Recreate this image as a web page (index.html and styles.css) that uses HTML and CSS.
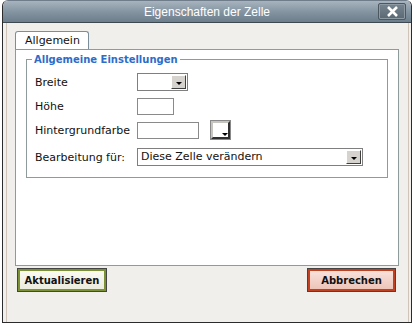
FILE: index.html
```
<html>
  <head>
    <title>Eigenschaften der Zelle</title>
    <link rel="stylesheet" href="styles.css">
  </head>
  <body>
    <div class="dialog">
      <div class="titlebar">
        <span class="title">Eigenschaften der Zelle</span>
        <span class="close">
          <svg width="13" height="11" viewBox="0 0 13 11"><path d="M2 1 L11 10 M11 1 L2 10" stroke="#fff" stroke-width="2.6"/></svg>
        </span>
      </div>
      <div class="frame">
        <div class="tabs">
          <div class="tab">Allgemein</div>
        </div>
        <div class="panel">
          <fieldset class="group">
            <legend>Allgemeine Einstellungen</legend>
            <div class="row">
              <label>Breite</label>
              <span class="select small"><span class="value"></span><span class="arrow"><i></i></span></span>
            </div>
            <div class="row">
              <label>Höhe</label>
              <span class="input short"></span>
            </div>
            <div class="row">
              <label>Hintergrundfarbe</label>
              <span class="input mid"></span>
              <span class="picker"><i></i></span>
            </div>
            <div class="row last">
              <label>Bearbeitung für:</label>
              <span class="select wide"><span class="value">Diese Zelle verändern</span><span class="arrow"><i></i></span></span>
            </div>
          </fieldset>
        </div>
        <div class="buttons">
          <button class="btn ok">Aktualisieren</button>
          <button class="btn cancel">Abbrechen</button>
        </div>
      </div>
    </div>
  </body>
</html>
```

FILE: styles.css
```
body{
  margin:0;
  background:#fff;
  font-family:"DejaVu Sans",Verdana,sans-serif;
  font-size:10px;
  color:#111;
}

.dialog{
  margin-left:2px;
  width:408px;
  height:321px;
  border:1px solid #2b2b2b;
  border-top-color:#6e7d89;
  border-radius:6px 6px 0 0;
  background:#f0efec;
  overflow:hidden;
}

.titlebar{
  position:relative;
  height:21px;
  background:linear-gradient(#a7b4bf,#8595a2 50%,#6c7d8b);
  border-bottom:1px solid #3d4850;
  text-align:center;
}

.title{
  font-family:"Liberation Sans",Arial,sans-serif;
  font-size:12px;
  line-height:22px;
  color:#fff;
}

/* close box sits over the bar */
.close{
  position:absolute;
  right:5px;
  top:2px;
  width:26px;
  height:15px;
  border:1px solid #4c5760;
  border-radius:2px;
  background:linear-gradient(#76858f,#5a6873);
  box-shadow:inset 0 0 0 1px #8d9aa3;
  display:flex;
  align-items:center;
  justify-content:center;
}

.frame{
  margin:0 2px 2px 3px;
  height:294px;
  border:1px solid #cec5b8;
  border-top:none;
  padding:8px 9px 0 8px;
}

.tabs{
  display:flex;
  height:18px;
}

.tab{
  width:74px;
  height:18px;
  border:1px solid #7d8d99;
  border-bottom:none;
  border-radius:3px 3px 0 0;
  background:#fff;
  font-size:11px;
  line-height:18px;
  padding-left:9px;
  box-sizing:border-box;
  position:relative;
  z-index:1;
}

.panel{
  height:211px;
  border:1px solid #8e9b9b;
  background:#fff;
  padding:4px 10px 0 10px;
}

.group{
  margin:0;
  border:1px solid #8e9b9b;
  padding:5px 8px 8px 8px;
}

.group legend{
  padding:0 2px;
  margin-left:-3px;
  color:#2e6cc8;
  font-weight:bold;
  font-size:10px;
}

.row{
  display:flex;
  align-items:center;
  height:24px;
  font-size:11px;
}

.row.last{
  margin-top:3px;
}

.row label{
  width:102px;
}

.input{
  display:block;
  height:15px;
  border:1px solid #8a8a8a;
  background:#fff;
}

.short{width:35px;}
.mid{width:60px;}

.select{
  display:flex;
  height:16px;
  border:1px solid #7f7f7f;
  background:#fff;
}

.select.small{width:49px;}
.select.wide{width:224px;}

.select .value{
  flex:1;
  font-size:11px;
  line-height:16px;
  padding-left:3px;
}

.arrow{
  height:14px;
  margin:1px;
  background:#d6d3ce;
  border:1px solid;
  border-color:#fff #404040 #404040 #fff;
  box-sizing:border-box;
  width:15px;
  display:flex;
  align-items:center;
  justify-content:center;
}

.arrow i,.picker i{
  display:block;
  width:0;
  height:0;
  border-left:3px solid transparent;
  border-right:3px solid transparent;
  border-top:3px solid #000;
  margin-top:2px;
}

.picker{
  position:relative;
  margin-left:12px;
  width:15px;
  height:14px;
  border:2px solid;
  border-color:#c8c5c0 #303030 #303030 #c8c5c0;
  background:#fff;
  box-shadow:0 0 0 1px #888;
}

/* little arrow tucked in the corner */
.picker i{
  position:absolute;
  right:0;
  bottom:1px;
}

.buttons{
  display:flex;
  justify-content:space-between;
  padding:2px 3px 0 2px;
}

.btn{
  height:22px;
  font-family:"DejaVu Sans",Verdana,sans-serif;
  font-size:10px;
  font-weight:bold;
  color:#111;
  padding:0 4px;
  border:2px solid;
  box-shadow:0 0 0 1px #444;
  margin:1px;
}

.ok{
  width:88px;
  border-color:#7a9234;
  background:linear-gradient(#fbfaf2,#ecebdf);
}

.cancel{
  width:87px;
  border-color:#c2401f;
  background:linear-gradient(#f8e2dc,#eec4b8);
}
```
